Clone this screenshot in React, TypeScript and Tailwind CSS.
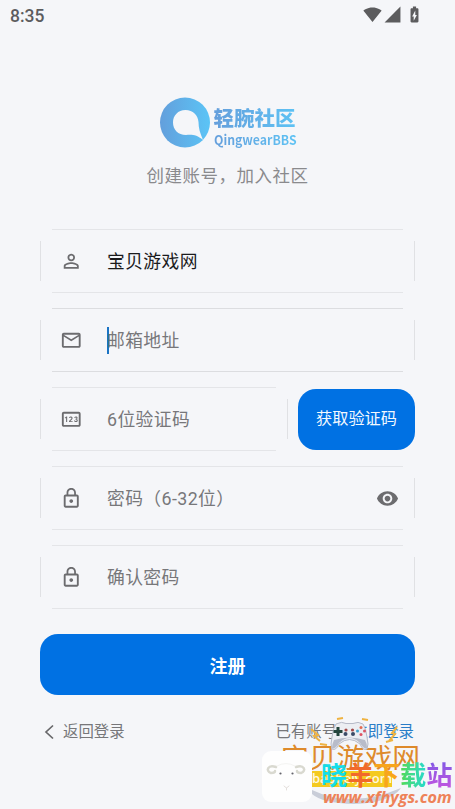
import React from 'react';
import {
  MdBatteryChargingFull,
  MdMailOutline,
  MdLockOutline,
  MdOutlinePin,
  MdPersonOutline,
  MdSignalCellular4Bar,
  MdSignalWifi4Bar,
  MdVisibility,
} from 'react-icons/md';

interface FieldProps {
  icon: React.ReactNode;
  text: string;
  filled?: boolean;
  focused?: boolean;
  trailing?: React.ReactNode;
}

// Input outline is four separate strokes with open corners
const Field: React.FC<FieldProps> = ({ icon, text, filled, focused, trailing }) => (
  <div className="flex h-[64px] w-full min-w-0 flex-col">
    <div className={`mr-3 ml-3 h-px ${focused ? 'bg-[#dcdde0]' : 'bg-[#e4e5e8]'}`} />
    <div className="flex flex-1 items-center">
      <div className="h-10 w-px bg-[#e0e1e4]" />
      <div className="ml-[19px] flex w-[23px] justify-center text-[22.5px] text-[#6c6c6f]">{icon}</div>
      {focused && <div className="-mr-[2px] ml-[24px] h-[27px] w-[2px] bg-[#1a73c4]" />}
      <span
        className={`flex-1 pt-[2px] text-[17.8px] tracking-[0.4px] whitespace-nowrap ${focused ? '' : 'ml-[24px]'} ${
          filled ? 'text-[#1b1b1d]' : 'text-[#77777a]'
        }`}
      >
        {text}
      </span>
      {trailing}
      <div className="h-10 w-px bg-[#e0e1e4]" />
    </div>
    <div className={`mr-3 ml-3 h-px ${focused ? 'bg-[#dcdde0]' : 'bg-[#e4e5e8]'}`} />
  </div>
);

const StatusBar: React.FC = () => (
  <div className="flex h-8 items-center justify-between pr-[31px] pl-[10px] text-[#5c5c5e]">
    <span className="font-['Roboto'] text-[17.5px] font-medium">8:35</span>
    <div className="-mt-[3px] flex items-center">
      <MdSignalWifi4Bar className="h-[19px] w-[19px]" />
      <MdSignalCellular4Bar className="ml-[1px] h-[19px] w-[19px]" />
      <MdBatteryChargingFull className="ml-[3px] h-[19px] w-[19px]" />
    </div>
  </div>
);

const Logo: React.FC = () => (
  <div className="flex items-center gap-[4px]">
    <svg width="50" height="51" viewBox="0 0 50 51">
      <defs>
        <linearGradient id="ring" x1="0" y1="0" x2="1" y2="0">
          <stop offset="0" stopColor="#639fdc" />
          <stop offset="1" stopColor="#5bc4f6" />
        </linearGradient>
      </defs>
      <circle cx="25" cy="25.5" r="25" fill="url(#ring)" />
      <path
        d="M25.500 13 C33 13 38 18 38.500 25 C38.500 31 40 36 43 43 C37 38 33 37.500 26 38 C18 38 13 32.500 13 25.500 C13 18.500 18 13 25.500 13Z"
        fill="#f5f6f9"
      />
    </svg>
    <div className="flex w-[82px] flex-col items-start pt-[11px]">
      <span className="bg-linear-to-r from-[#659fdc] to-[#5dc2f4] bg-clip-text text-[20.5px] leading-[23px] font-black whitespace-nowrap text-transparent">
        轻腕社区
      </span>
      <span className="origin-left scale-x-[0.91] bg-linear-to-r from-[#659fdc] to-[#5dc2f4] bg-clip-text font-['Noto_Sans_CJK_SC',sans-serif] text-[13.5px] leading-[17px] font-bold whitespace-nowrap text-transparent">
        QingwearBBS
      </span>
    </div>
  </div>
);

const Gamepad: React.FC = () => (
  <svg className="absolute top-[8px] left-[70px]" width="39" height="32" viewBox="0 0 39 32">
    <path
      d="M6 4 Q12 1 16 3.500 H23 Q28 1 33 4 Q36 8 37 17 Q39 25 37 29 Q33 31 30 24 Q19.500 15 9 24 Q6 31 2 29 Q0 25 2 17 Q3 8 6 4Z"
      fill="#eceef2"
      stroke="#b6bac7"
      strokeWidth="1"
    />
    <path d="M2 28 Q5 30 9 23 Q19.500 13 30 23 Q34 30 37 28 Q37 23 35 20 Q19.500 15 4 20 Q2 24 2 28Z" fill="#b8bcc9" />
    <path d="M6.500 7h3v3h3v3h-3v3h-3v-3h-3v-3h3z" fill="#24463d" />
    <circle cx="16" cy="10" r="1.600" fill="#a34a49" />
    <circle cx="22.500" cy="10" r="1.600" fill="#a34a49" />
    <circle cx="15.500" cy="14" r="2" fill="#3b4a66" />
    <circle cx="23" cy="14" r="2" fill="#3b4a66" />
    <circle cx="31" cy="7.500" r="1.500" fill="#e46a50" />
    <circle cx="31" cy="14.500" r="1.500" fill="#df5261" />
    <circle cx="27.500" cy="11" r="1.500" fill="#43a4cf" />
    <circle cx="34.500" cy="11" r="1.500" fill="#d95766" />
  </svg>
);

const Watermark: React.FC = () => (
  <div className="absolute right-0 bottom-0 h-[97px] w-[195px]">
    <svg className="absolute inset-0" width="195" height="97" viewBox="0 0 195 97">
      <path d="M52 78 Q92 97 141 76 Q130 91 94 92 Q62 91 52 82Z" fill="#c9cdd8" />
      <path
        d="M51 17l7 6-4 1 6 5M60 32l7 1M137 15l-5 6 3 1-6 7M126 30l7-2M77 7l6-1M102 7l6 1"
        fill="none"
        stroke="#efb341"
        strokeWidth="2"
      />
    </svg>
    <span className="absolute top-[29px] left-[21px] text-[27.8px] leading-[36px] font-normal whitespace-nowrap text-[#de8a2b]">
      宝贝游戏网
    </span>
    <Gamepad />
    <div className="absolute top-[59px] left-[51px] h-[16px] w-[81px] bg-[#f4ca20] pl-px font-['Open_Sans',sans-serif] text-[13px] leading-[14px] font-semibold text-[#fff8e0]">
      baobeiy.com
    </div>
    <div className="absolute top-[39px] left-[2px] flex h-[51px] w-[50px] items-center justify-center rounded-[9px] bg-[#fefefe]">
      <svg width="50" height="51" viewBox="0 0 50 51">
        <g fill="none" stroke="#d9d9d0" strokeLinecap="round">
          <path d="M14 16 C6 13 3 20 9 22 Q13 22 13 20" strokeWidth="2.500" />
          <path d="M34 16 C42 13 45 20 39 22 Q35 22 35 20" strokeWidth="2.500" />
          <path d="M22 35l2.500 2 2.500-2M24.500 37v2" stroke="#e4dfdc" strokeWidth="1" />
          <path d="M15 15Q24 10 33 15" stroke="#f4f4f2" strokeWidth="1" />
        </g>
        <circle cx="18.500" cy="22.500" r="1.100" fill="#65656d" />
        <circle cx="30.500" cy="22.500" r="1.100" fill="#65656d" />
      </svg>
    </div>
    <div className="absolute top-[46px] left-[61px] flex text-[26.3px] leading-[36px] font-bold whitespace-nowrap">
      <span className="text-[#13ddea]">晓</span>
      <span className="text-[#f1692b]">羊</span>
      <span className="text-[#f8a51c]">下</span>
      <span className="bg-linear-to-r from-[#53d94a] to-[#24d9cc] bg-clip-text text-transparent">载</span>
      <span className="bg-linear-to-b from-[#7857e6] to-[#cf52de] bg-clip-text text-transparent">站</span>
    </div>
    <span className="absolute top-[75px] left-[63px] font-['Open_Sans',sans-serif] text-[16.2px] leading-[20px] font-bold whitespace-nowrap text-[#ee8258] italic">
      www.xfhygs.com
    </span>
  </div>
);

const App: React.FC = () => {
  return (
    <div className="relative h-[809px] w-[455px] overflow-hidden bg-[#f5f6f9] font-['Roboto','Noto_Sans_CJK_SC',sans-serif]">
      <StatusBar />

      <div className="flex flex-col items-center pt-[65px]">
        <Logo />
        <p className="mt-[15px] text-[17.5px] leading-[26px] tracking-[0.5px] text-[#8a8a8d]">创建账号，加入社区</p>
      </div>

      {/* Registration form */}
      <div className="mt-[40px] flex flex-col gap-[15px] px-[40px]">
        <Field icon={<MdPersonOutline />} text="宝贝游戏网" filled />
        <Field icon={<MdMailOutline />} text="邮箱地址" focused />
        <div className="flex items-center gap-[10px]">
          <Field icon={<MdOutlinePin />} text="6位验证码" />
          <button className="h-[61px] w-[117px] shrink-0 rounded-[18px] bg-[#0071e3] pt-[1px] text-[16.2px] text-[#f2f8ff]">
            获取验证码
          </button>
        </div>
        <Field
          icon={<MdLockOutline />}
          text="密码（6-32位）"
          trailing={<MdVisibility className="mr-[15px] h-[23px] w-[23px] text-[#6c6c6f]" />}
        />
        <Field icon={<MdLockOutline />} text="确认密码" />
      </div>

      <div className="mt-[25px] px-[40px]">
        <button className="h-[61px] w-full rounded-[18px] bg-[#0071e3] pt-[4px] text-[18px] font-bold text-white">注册</button>
      </div>

      <div className="mt-[25px] flex items-center justify-between pr-[41px] pl-[44px] text-[15.4px] leading-[24px] text-[#77777a]">
        <div className="flex items-center gap-[8px]">
          <svg width="11" height="16" viewBox="0 0 11 16" fill="none" stroke="#68686b" strokeWidth="1.700">
            <path d="M9 1.500L2 8l7 6.500" />
          </svg>
          <span>返回登录</span>
        </div>
        <div>
          已有账号？<span className="text-[#2a7dc8]">立即登录</span>
        </div>
      </div>

      <Watermark />
    </div>
  );
};

export default App;
